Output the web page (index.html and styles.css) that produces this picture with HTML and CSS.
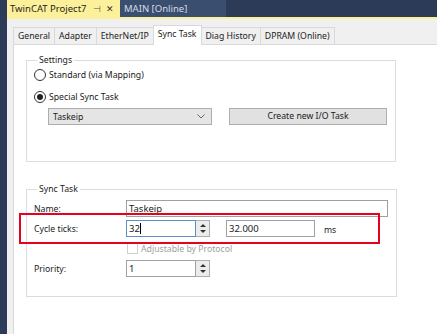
FILE: index.html
```html
<!DOCTYPE html>
<html lang="en">
<head>
  <meta charset="UTF-8">
  <title>TwinCAT Project7 - Sync Task</title>
  <link rel="stylesheet" href="styles.css">
</head>
<body>
  <div class="doc-tabs">
    <div class="doc-tab active">
      <span>TwinCAT Project7</span>
      <span class="pin">&#8867;</span>
      <span class="close">&#10005;</span>
    </div>
    <div class="doc-tab">MAIN [Online]</div>
  </div>
  <div class="doc-line"></div>

  <div class="window">
    <div class="tab-strip">
      <div class="tab">General</div>
      <div class="tab">Adapter</div>
      <div class="tab">EtherNet/IP</div>
      <div class="tab selected">Sync Task</div>
      <div class="tab">Diag History</div>
      <div class="tab">DPRAM (Online)</div>
    </div>

    <div class="panel">
      <fieldset class="group settings">
        <legend>Settings</legend>
        <div class="radio-row">
          <span class="radio"></span>
          <span>Standard (via Mapping)</span>
        </div>
        <div class="radio-row second">
          <span class="radio checked"></span>
          <span>Special Sync Task</span>
        </div>
        <div class="task-row">
          <div class="combo">
            <span>Taskeip</span>
            <svg width="8" height="5" viewBox="0 0 8 5"><path d="M0.5 0.5 L4 4 L7.5 0.5" fill="none" stroke="#666" stroke-width="1"/></svg>
          </div>
          <div class="button">Create new I/O Task</div>
        </div>
      </fieldset>

      <fieldset class="group sync">
        <legend>Sync Task</legend>
        <div class="form-row">
          <span class="label">Name:</span>
          <div class="textbox wide">Taskeip</div>
        </div>
        <div class="form-row cycle">
          <span class="label">Cycle ticks:</span>
          <div class="spin">
            <div class="textbox short focus">32<span class="caret"></span></div>
            <div class="spin-btn">
              <span class="up"></span>
              <span class="down"></span>
            </div>
          </div>
          <div class="textbox ms-box">32.000</div>
          <span class="unit">ms</span>
          <div class="highlight"></div>
        </div>
        <div class="check-row">
          <span class="checkbox"></span>
          <span>Adjustable by Protocol</span>
        </div>
        <div class="form-row">
          <span class="label">Priority:</span>
          <div class="spin">
            <div class="textbox short">1</div>
            <div class="spin-btn">
              <span class="up"></span>
              <span class="down"></span>
            </div>
          </div>
        </div>
      </fieldset>
    </div>
  </div>
</body>
</html>
```

FILE: styles.css
```css
body {
  margin: 0;
  height: 334px;
  overflow: hidden;
  background-color: #2c3b57;
  font-family: "Noto Sans", "Open Sans", sans-serif;
  font-size: 8.7px;
  color: #1a1a1a;
  padding-left: 7px;
}
.doc-tabs {
  display: flex;
  height: 17px;
}
.doc-tab {
  display: flex;
  align-items: center;
  white-space: nowrap;
  padding: 0 4px;
  color: #d4dbe8;
  background-color: #3a4f70;
  font-size: 9.5px;
  width: 98px;
}
.doc-tab.active {
  background-color: #fdf09b;
  color: #1e1e1e;
  width: 106px;
  padding-left: 3px;
}
.doc-tab .pin {
  margin-left: 6px;
  font-size: 9px;
  color: #555;
}
.doc-tab .close {
  margin-left: 5px;
  font-size: 9px;
  color: #333;
}
.doc-line {
  height: 2px;
  background-color: #fdf09b;
}
.window {
  background-color: #f0f0f0;
  height: 315px;
  padding-left: 6px;
}
.tab-strip {
  display: flex;
  align-items: flex-end;
  height: 25px;
}
.tab {
  height: 16px;
  line-height: 16px;
  padding: 0 4px;
  border: 1px solid #d9d9d9;
  border-bottom: none;
  margin-right: -1px;
  background-color: #f0f0f0;
  color: #222;
}
.tab.selected {
  height: 19px;
  line-height: 17px;
  background-color: #fff;
  position: relative;
  z-index: 1;
  margin-bottom: -1px;
}
.panel {
  background-color: #fff;
  border: 1px solid #d9d9d9;
  border-right: none;
  height: 290px;
  padding: 9px 0 0 12px;
}
.group {
  width: 352px;
  margin: 0;
  border: 1px solid #dcdcdc;
  padding: 0 8px 0 7px;
}
.group legend {
  padding: 0 2px;
  margin-left: 3px;
  color: #222;
}
.settings {
  height: 106px;
}
.radio-row {
  display: flex;
  align-items: center;
  gap: 3px;
  height: 18px;
}
.radio-row.second {
  margin-top: 4px;
}
.radio {
  width: 10px;
  height: 10px;
  border: 1px solid #333;
  border-radius: 50%;
  background-color: #fff;
  position: relative;
}
.radio.checked::after {
  content: "";
  position: absolute;
  left: 2px;
  top: 2px;
  width: 6px;
  height: 6px;
  border-radius: 50%;
  background-color: #222;
}
.task-row {
  display: flex;
  margin-top: 2px;
  padding-left: 14px;
  gap: 17px;
}
.combo {
  width: 152px;
  height: 15px;
  border: 1px solid #adadad;
  background-color: #e5e5e5;
  display: flex;
  align-items: center;
  justify-content: space-between;
  padding: 0 6px 0 4px;
}
.button {
  width: 156px;
  height: 15px;
  border: 1px solid #adadad;
  background-color: #e1e1e1;
  text-align: center;
  line-height: 15px;
}
.sync {
  margin-top: 21px;
  height: 107px;
  padding-top: 5px;
}
.form-row {
  display: flex;
  align-items: center;
  height: 17px;
  margin-bottom: 3px;
}
.label {
  width: 92px;
}
.textbox {
  height: 15px;
  line-height: 15px;
  border: 1px solid #a0a0a0;
  background-color: #fff;
  padding: 0 2px;
  font-size: 9.5px;
}
.textbox.wide {
  width: 256px;
}
.textbox.short {
  width: 64px;
}
.textbox.focus {
  border-color: #5a8fc8;
}
.caret {
  display: inline-block;
  width: 1px;
  height: 11px;
  background-color: #000;
  vertical-align: -2px;
}
.spin {
  display: flex;
}
.spin-btn {
  width: 13px;
  height: 13px;
  border: 1px solid #adadad;
  border-left: none;
  background-color: #ececec;
  display: flex;
  flex-direction: column;
  align-items: center;
  justify-content: space-around;
  padding: 1px 0;
}
.spin-btn .up,
.spin-btn .down {
  width: 0;
  height: 0;
  border-left: 3px solid transparent;
  border-right: 3px solid transparent;
}
.spin-btn .up {
  border-bottom: 3px solid #333;
}
.spin-btn .down {
  border-top: 3px solid #333;
}
.ms-box {
  width: 83px;
  margin-left: 16px;
}
.unit {
  margin-left: 9px;
  padding-top: 2px;
}
.cycle {
  position: relative;
}
.highlight {
  position: absolute;
  left: -15px;
  top: -7px;
  width: 357px;
  height: 27px;
  border: 2px solid #e8001c;
}
.check-row {
  display: flex;
  align-items: center;
  gap: 3px;
  height: 17px;
  padding-left: 93px;
  color: #a0a0a0;
  margin-bottom: 3px;
}
.checkbox {
  width: 9px;
  height: 9px;
  border: 1px solid #cfcfcf;
}
```
